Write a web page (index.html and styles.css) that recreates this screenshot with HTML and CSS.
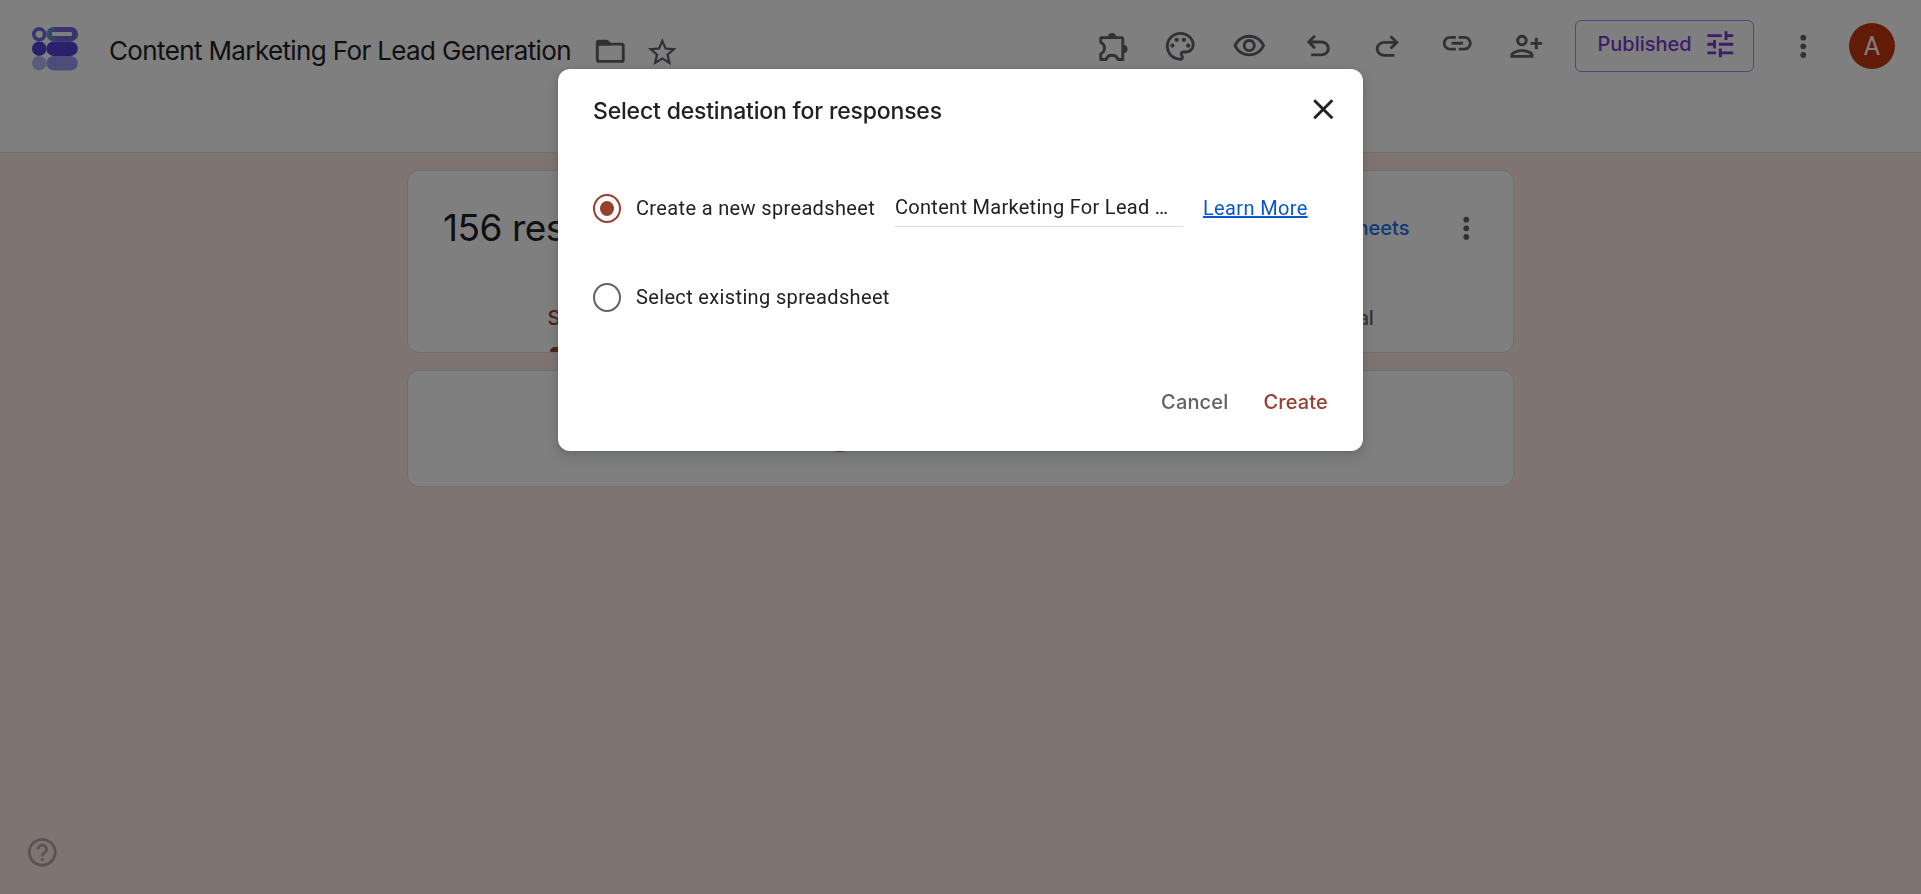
FILE: index.html
```html
<!DOCTYPE html>
<html lang="en">

<head>
  <meta charset="UTF-8">
  <meta name="viewport" content="width=device-width, initial-scale=1.0">
  <title>Content Marketing For Lead Generation</title>
  <link rel="stylesheet" href="styles.css">
</head>

<body>
  <header class="header">
    <svg class="logo" viewBox="0 0 46 44">
      <defs>
        <linearGradient id="pill">
          <stop offset="0" stop-color="#5aa0cc" />
          <stop offset=".3" stop-color="#756dd8" />
          <stop offset="1" stop-color="#7468dc" />
        </linearGradient>
      </defs>
      <circle cx="7.2" cy="7.3" r="5.4" fill="none" stroke="#7468dc" stroke-width="3.6" />
      <path fill="url(#pill)" fill-rule="evenodd" d="M21.5 0h17.3a7.2 7.2 0 0 1 0 14.4H21.5a7.2 7.2 0 0 1 0-14.4zM21 5a1 1 0 0 0-1 1v2a1 1 0 0 0 1 1h18a1 1 0 0 0 1-1V6a1 1 0 0 0-1-1z" />
      <circle cx="7.2" cy="21.7" r="7.2" fill="#5440d8" />
      <rect x="14.4" y="14.5" width="31.4" height="14.4" rx="7.2" fill="#5440d8" />
      <circle cx="7.2" cy="36.2" r="7.2" fill="#b5b9f4" />
      <rect x="14.4" y="29" width="31.4" height="14.4" rx="7.2" fill="#9d98f4" />
    </svg>
    <div class="title">Content Marketing For Lead Generation</div>
    <svg class="icon folder" viewBox="0 0 24 24">
      <rect x="3" y="7" width="18" height="12" rx="1" fill="none" stroke="currentColor" stroke-width="2" />
      <path d="M2 8V6a2 2 0 0 1 2-2h5.200a2 2 0 0 1 1.400.6L12.500 6.500V8z" />
    </svg>
    <svg class="icon star" viewBox="0 0 24 24"><path d="M22 9.240l-7.190-.62L12 2 9.190 8.630 2 9.240l5.460 4.730L5.820 21 12 17.270 18.180 21l-1.630-7.030L22 9.240zM12 15.400l-3.760 2.270 1-4.280-3.320-2.880 4.380-.38L12 6.100l1.710 4.040 4.380.38-3.320 2.880 1 4.280L12 15.400z" /></svg>
    <div class="actions">
      <div class="action"><svg class="icon" viewBox="0 0 24 24">
        <path fill="none" stroke="currentColor" stroke-width="2" stroke-linejoin="round" d="M5 6h14.200a.8.8 0 0 1 .8.8v14.400h-3.400a4.300 4.300 0 0 0-8.200 0H4.700v-4a4.300 4.300 0 0 0 0-7.900V6.300z" />
        <path d="M9.700 5.500a2.800 2.800 0 0 1 5.600 0zM20.500 11.100a2.800 2.800 0 0 1 0 5.600z" />
      </svg></div>
      <div class="action"><svg class="icon" viewBox="0 0 24 24">
        <path d="M12 22C6.490 22 2 17.510 2 12S6.490 2 12 2s10 4.040 10 9c0 3.310-2.690 6-6 6h-1.770c-.28 0-.5.22-.5.5 0 .12.05.23.13.33.41.47.64 1.060.64 1.670A2.500 2.500 0 0 1 12 22zm0-18c-4.410 0-8 3.590-8 8s3.590 8 8 8c.28 0 .5-.22.5-.5a.54.54 0 0 0-.14-.35c-.41-.46-.63-1.050-.63-1.650a2.500 2.500 0 0 1 2.500-2.500H16c2.210 0 4-1.790 4-4 0-3.860-3.590-7-8-7z" />
        <circle cx="6.5" cy="11.5" r="1.5" /><circle cx="9.5" cy="7.5" r="1.5" /><circle cx="14.5" cy="7.5" r="1.5" /><circle cx="17.5" cy="11.5" r="1.5" />
      </svg></div>
      <div class="action"><svg class="icon" viewBox="0 0 24 24"><path d="M12 6a9.770 9.770 0 0 1 8.820 5.500A9.770 9.770 0 0 1 12 17a9.770 9.770 0 0 1-8.820-5.500A9.770 9.770 0 0 1 12 6m0-2C7 4 2.730 7.110 1 11.500 2.730 15.890 7 19 12 19s9.270-3.110 11-7.500C21.270 7.110 17 4 12 4zm0 5a2.500 2.500 0 0 1 0 5 2.500 2.500 0 0 1 0-5m0-2c-2.480 0-4.500 2.020-4.500 4.500S9.520 16 12 16s4.500-2.020 4.500-4.500S14.480 7 12 7z" /></svg></div>
      <div class="action"><svg class="icon" viewBox="0 0 24 24"><path d="M7 19v-2h7.100q1.575 0 2.738-1T18 13.500 16.838 11 14.100 10H7.800l2.600 2.600L9 14 4 9l5-5 1.400 1.400L7.800 8h6.300q2.425 0 4.163 1.575T20 13.500t-1.737 3.925T14.100 19z" /></svg></div>
      <div class="action"><svg class="icon" viewBox="0 0 24 24"><path transform="matrix(-1 0 0 1 24 .3)" d="M7 19v-2h7.100q1.575 0 2.738-1T18 13.500 16.838 11 14.100 10H7.800l2.600 2.600L9 14 4 9l5-5 1.400 1.400L7.800 8h6.300q2.425 0 4.163 1.575T20 13.500t-1.737 3.925T14.100 19z" /></svg></div>
      <div class="action link"><svg class="icon" viewBox="0 0 24 24"><path d="M3.900 12c0-1.710 1.390-3.100 3.100-3.100h4V7H7c-2.760 0-5 2.240-5 5s2.240 5 5 5h4v-1.900H7c-1.710 0-3.100-1.390-3.100-3.100zM8 13h8v-2H8v2zm9-6h-4v1.900h4c1.710 0 3.100 1.390 3.100 3.100s-1.390 3.100-3.100 3.100h-4V17h4c2.760 0 5-2.240 5-5s-2.240-5-5-5z" /></svg></div>
      <div class="action"><svg class="icon" viewBox="0 0 24 24"><path d="M13 8c0-2.210-1.790-4-4-4S5 5.790 5 8s1.790 4 4 4 4-1.790 4-4zm-2 0c0 1.100-.9 2-2 2s-2-.9-2-2 .9-2 2-2 2 .9 2 2zM1 18v2h16v-2c0-2.660-5.330-4-8-4s-8 1.340-8 4zm2 0c.2-.71 3.300-2 6-2 2.690 0 5.770 1.280 6 2H3zM20 14v-3h3V9h-3V6h-2v3h-3v2h3v3z" /></svg></div>
      <div class="published">
        <span>Published</span>
        <svg class="icon" viewBox="0 0 24 24"><path d="M3 5h10v2H3zM15 3h2v2h4v2h-4v2h-2zM3 11h4V9h2v6H7v-2H3zM11 11h10v2H11zM3 17h6v2H3zM11 15h2v2h8v2h-8v2h-2z" /></svg>
      </div>
      <svg class="icon more" viewBox="0 0 24 24"><circle cx="12" cy="6" r="2" /><circle cx="12" cy="12" r="2" /><circle cx="12" cy="18" r="2" /></svg>
      <div class="avatar">A</div>
    </div>
  </header>

  <main class="main">
    <section class="card summary">
      <div class="summary-top">
        <h1 class="count">156 responses</h1>
        <span class="sheets">Link to Sheets</span>
        <svg class="icon" viewBox="0 0 24 24"><circle cx="12" cy="6" r="2" /><circle cx="12" cy="12" r="2" /><circle cx="12" cy="18" r="2" /></svg>
      </div>
      <nav class="tabs">
        <div class="tab active">Summary</div>
        <div class="tab">Question</div>
        <div class="tab">Individual</div>
      </nav>
    </section>
    <section class="card status">
      <div class="status-dot"></div>
    </section>
  </main>

  <div class="help">
    <svg class="icon" viewBox="0 0 24 24"><path d="M11 18h2v-2h-2v2zm1-16C6.480 2 2 6.480 2 12s4.480 10 10 10 10-4.480 10-10S17.520 2 12 2zm0 18c-4.410 0-8-3.590-8-8s3.590-8 8-8 8 3.590 8 8-3.590 8-8 8zm0-14c-2.210 0-4 1.790-4 4h2c0-1.100.9-2 2-2s2 .9 2 2c0 2-3 1.750-3 5h2c0-2.250 3-2.500 3-5 0-2.210-1.790-4-4-4z" /></svg>
  </div>

  <div class="overlay">
    <div class="dialog">
      <div class="dialog-head">
        <h2 class="dialog-title">Select destination for responses</h2>
        <svg class="icon close" viewBox="0 0 24 24"><path d="M19 6.410L17.590 5 12 10.590 6.410 5 5 6.410 10.590 12 5 17.590 6.410 19 12 13.410 17.590 19 19 17.590 13.410 12z" /></svg>
      </div>
      <div class="option">
        <div class="radio checked"></div>
        <span class="label label-new">Create a new spreadsheet</span>
        <div class="name">Content Marketing For Lead …</div>
        <a class="learn" href="#">Learn More</a>
      </div>
      <div class="option existing">
        <div class="radio"></div>
        <span class="label">Select existing spreadsheet</span>
      </div>
      <div class="buttons">
        <div class="button cancel">Cancel</div>
        <div class="button create">Create</div>
      </div>
    </div>
  </div>
</body>
</html>
```

FILE: styles.css
```css
* {
  box-sizing: border-box;
}
body {
  margin: 0;
  height: 894px;
  overflow: hidden;
  background-color: #ffe9e4;
  font-family: Roboto, "Liberation Sans", sans-serif;
  font-size: 20px;
  color: #202124;
}
.icon {
  width: 34.56px;
  height: 34.56px;
  flex: none;
  display: block;
  fill: currentColor;
}
.header {
  height: 153px;
  background-color: white;
  border-bottom: 1px solid #dadce0;
  display: flex;
  align-items: flex-start;
  padding-left: 32px;
  color: #5f6368;
}
.logo {
  width: 46px;
  height: 44px;
  margin-top: 27px;
  flex: none;
}
.title {
  margin: 34px 0 0 31px;
  width: 484px;
  line-height: 34px;
  font-family: Inter, sans-serif;
  font-size: 26px;
  letter-spacing: -0.63px;
  white-space: nowrap;
  color: #202124;
}
.folder {
  margin-top: 34px;
}
.star {
  margin: 35px 0 0 17px;
}
.actions {
  margin-left: auto;
  height: 92px;
  display: flex;
  align-items: center;
}
.action {
  width: 69.12px;
  display: flex;
  justify-content: center;
}
.link {
  padding-bottom: 6px;
}
.published {
  width: 179px;
  height: 52px;
  margin-left: 15px;
  border: 1px solid #b583f0;
  border-radius: 6px;
  display: flex;
  align-items: center;
  padding: 0 16px 3px 21px;
  justify-content: space-between;
  font-family: Inter, sans-serif;
  font-weight: 500;
  line-height: 24px;
  color: #7a38d8;
}
.published span {
  margin-top: -1px;
}
.more {
  margin-left: 32px;
}
.avatar {
  width: 46px;
  height: 46px;
  margin: 0 26px 0 28px;
  border-radius: 50%;
  background-color: #c4360c;
  color: white;
  font-size: 25px;
  display: flex;
  justify-content: center;
  align-items: center;
}
.main {
  width: 1107px;
  margin: 17px auto 0;
  display: flex;
  flex-direction: column;
  gap: 17px;
}
.card {
  background-color: white;
  border: 1px solid #dadce0;
  border-radius: 12px;
}
.summary {
  height: 183px;
  display: flex;
  flex-direction: column;
  justify-content: space-between;
}
.summary-top {
  display: flex;
  align-items: center;
  height: 114px;
  padding: 0 29px 0 35px;
  color: #5f6368;
}
.count {
  margin: 0 auto 2px 0;
  font-family: Inter, sans-serif;
  font-size: 37px;
  font-weight: 400;
  letter-spacing: -0.5px;
  color: #202124;
}
.sheets {
  margin: 0 40px 1px 0;
  font-weight: 500;
  font-family: Inter, sans-serif;
  color: #1a73e8;
}
.tabs {
  display: grid;
  grid-template-columns: repeat(3, 1fr);
  justify-items: center;
}
.tab {
  height: 47px;
  line-height: 26px;
  font-family: Inter, sans-serif;
  font-weight: 500;
  letter-spacing: -0.3px;
  color: #5f6368;
  display: flex;
  flex-direction: column;
  justify-content: space-between;
}
.active {
  color: #98402d;
}
.active::after {
  content: "";
  height: 5px;
  margin: 0 2px;
  border-radius: 5px 5px 0 0;
  background-color: #98402d;
}
.status {
  height: 117px;
  display: flex;
  align-items: center;
  padding-left: 408px;
}
.status-dot {
  width: 47px;
  height: 47px;
  border-radius: 50%;
  background-color: #db4437;
}
.help {
  position: absolute;
  left: 24.5px;
  bottom: 24px;
  color: #b1a8a5;
}
.overlay {
  position: fixed;
  inset: 0;
  background-color: rgba(0, 0, 0, 0.5);
}
.dialog {
  width: 805px;
  height: 382px;
  margin: 69px auto 0;
  background-color: white;
  border-radius: 12px;
  padding: 23px 35px 0;
  box-shadow: 0 1px 4px rgba(60, 64, 67, 0.3), 0 6px 12px 4px rgba(60, 64, 67, 0.15);
}
.dialog-head {
  display: flex;
  justify-content: space-between;
  height: 35px;
}
.dialog-title {
  margin: 2px 0 0;
  line-height: 35px;
  font-family: Inter, sans-serif;
  font-size: 23px;
  font-weight: 500;
  letter-spacing: -0.18px;
}
.close {
  margin-right: -13px;
}
.option {
  display: flex;
  align-items: center;
  height: 44px;
  margin-top: 59px;
  letter-spacing: 0.35px;
}
.existing {
  margin-top: 45px;
}
.radio {
  width: 28px;
  height: 29px;
  border: 2px solid #5f6368;
  border-radius: 50%;
  display: flex;
  justify-content: center;
  align-items: center;
}
.checked {
  border-color: #98402d;
}
.checked::after {
  content: "";
  width: 14px;
  height: 15px;
  border-radius: 50%;
  background-color: #98402d;
}
.label {
  margin-left: 15px;
}
.label-new {
  width: 259px;
}
.name {
  width: 288px;
  height: 37px;
  line-height: 35px;
  border-bottom: 1px solid #dadce0;
  letter-spacing: 0.29px;
}
.learn {
  margin-left: 20px;
  color: #0b57d0;
}
.buttons {
  display: flex;
  justify-content: flex-end;
  gap: 35px;
  margin-top: 68px;
  line-height: 30px;
  font-family: Inter, sans-serif;
  font-weight: 500;
  letter-spacing: 0.15px;
}
.cancel {
  color: #5f6368;
}
.create {
  color: #98402d;
}
```
